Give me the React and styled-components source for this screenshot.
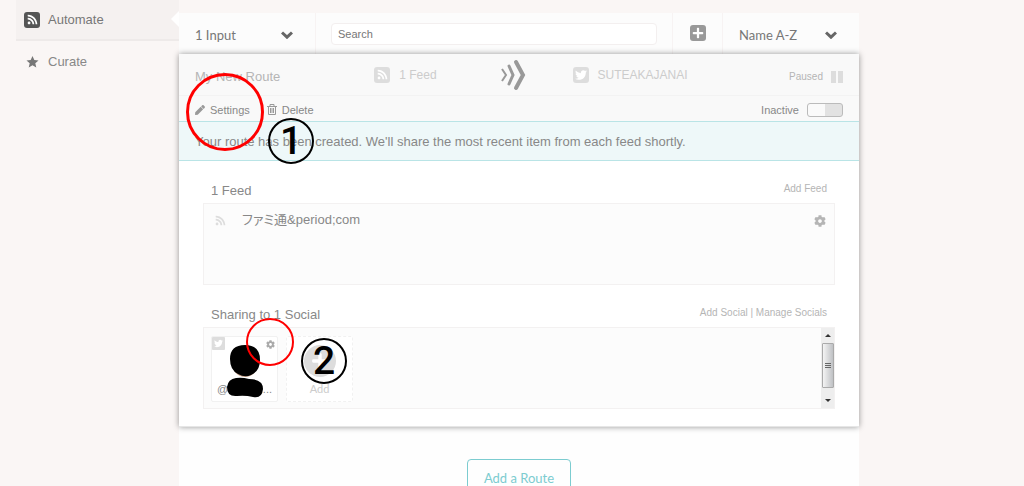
import React from "react";
import styled, { createGlobalStyle } from "styled-components";
import { FaPen, FaCog, FaRss, FaPlus, FaTwitter } from "react-icons/fa";

const GlobalStyle = createGlobalStyle`
  * {
    box-sizing: border-box;
  }
  body {
    margin: 0;
    background: #faf6f5;
    color: #888;
    font-family: "Liberation Sans", "Noto Sans CJK JP", sans-serif;
    font-size: 13px;
    line-height: 16px;
  }
  a {
    color: inherit;
    text-decoration: none;
  }
  button {
    padding: 0;
    border: none;
    background: none;
    color: inherit;
    font: inherit;
    cursor: pointer;
  }
  svg {
    display: block;
    flex: none;
  }
`;

const Page = styled.div`
  display: flex;
  height: 100vh;
  overflow: hidden;
  padding: 0 165px 0 16px;
`;

// Sidebar

const Sidebar = styled.nav`
  flex: none;
  width: 163px;
`;

const SidebarLink = styled.a`
  position: relative;
  display: flex;
  align-items: center;
  gap: 8px;
  height: 41px;
  padding-left: 8px;
  color: ${({ $active }) => ($active ? "#777" : "#888")};
  background: ${({ $active }) => ($active ? "#f5f1f0" : "none")};
  border-bottom: ${({ $active }) => ($active ? "2px solid #eeeae9" : "none")};
`;

const SidebarIcon = styled.span`
  display: flex;
  justify-content: center;
  width: 16px;
  color: ${({ color }) => color};
`;

const Notch = styled.span`
  position: absolute;
  right: 0;
  top: 11px;
  border: 8px solid transparent;
  border-right-color: #fff;
  border-left: none;
`;

const Badge = styled.span`
  display: flex;
  flex: none;
  justify-content: center;
  align-items: center;
  width: 16px;
  height: 16px;
  border-radius: 3px;
  background: ${({ $fill }) => $fill || "#ddd"};
  color: #fff;
`;

// Toolbar

const Main = styled.main`
  flex: 1;
  min-width: 0;
  padding-top: 13px;
`;

const MainBody = styled.div`
  height: 100%;
  background: #fefefe;
`;

const Toolbar = styled.div`
  display: flex;
  height: 41px;
  background: #fcfcfc;
`;

const Picker = styled.button`
  display: flex;
  justify-content: space-between;
  align-items: center;
  width: 136px;
  padding: 2px 22px 0 16px;
  font-family: Lato, sans-serif;
  font-size: 13px;
  color: #777;
`;

const SearchCell = styled.div`
  flex: 1;
  padding: 10px 15px 0;
  border-left: 1px solid #f7f3f3;
  border-right: 1px solid #f7f3f3;
`;

const SearchInput = styled.input`
  display: block;
  width: 100%;
  height: 22px;
  padding: 0 6px;
  border: 1px solid #f3efef;
  border-radius: 4px;
  background: #fff;
  font: 11px "Liberation Sans", sans-serif;
  color: #777;
  &::placeholder {
    color: #777;
    opacity: 1;
  }
`;

const AddCell = styled.button`
  display: flex;
  justify-content: center;
  align-items: center;
  width: 50px;
  padding-bottom: 2px;
  border-right: 1px solid #f7f3f3;
`;

// Route card

const Card = styled.section`
  position: relative;
  padding-bottom: 17px;
  background: #fff;
  border-bottom: 1px solid #e6e6e6;
  box-shadow: 0 0 6px rgba(0, 0, 0, 0.4);
`;

const CardHeader = styled.header`
  display: grid;
  grid-template-columns: 178fr 126fr 71fr 215fr auto;
  align-items: center;
  height: 42px;
  padding: 0 16px;
  background: #f9f9f9;
  border-bottom: 1px solid #f3f3f3;
  color: #ccc;
`;

const RouteName = styled.h2`
  margin: 0;
  padding-top: 4px;
  font-size: 13px;
  font-weight: normal;
  color: #b5b5b5;
`;

const IconLabel = styled.span`
  display: flex;
  align-items: center;
  gap: 9px;
  font-size: 12px;
  white-space: nowrap;
`;

const Status = styled.span`
  display: flex;
  align-items: center;
  gap: 8px;
  padding-top: 4px;
  font-size: 10px;
  color: #b5b5b5;
`;

const Actions = styled.div`
  display: flex;
  align-items: center;
  gap: 17px;
  height: 25px;
  padding: 2px 16px 0;
  background: #f9f9f9;
  font-size: 11px;
`;

const ActionButton = styled.button`
  display: flex;
  align-items: center;
  gap: 5px;
  & > svg {
    color: #999;
  }
`;

const SwitchLabel = styled.label`
  display: flex;
  align-items: center;
  gap: 8px;
  margin-left: auto;
`;

const Switch = styled.input`
  appearance: none;
  width: 36px;
  height: 14px;
  margin: 0;
  border: 1px solid #bbb;
  border-radius: 3px;
  background: linear-gradient(90deg, #fafafa 50%, #e2e2e2 50%);
`;

const Notice = styled.p`
  margin: 0;
  padding: 12px 16px 10px;
  border: 1px solid #b9e4e6;
  border-width: 1px 0;
  background: #eef8f9;
  font-size: 13px;
`;

const Group = styled.div`
  padding: 0 24px;
`;

const GroupHead = styled.div`
  display: flex;
  justify-content: space-between;
  align-items: flex-end;
  height: 42px;
  padding: 0 8px 3px;
`;

const GroupTitle = styled.h3`
  margin: 0;
  font-size: 13px;
  font-weight: normal;
  line-height: 18px;
`;

const GroupLinks = styled.div`
  padding-bottom: 3px;
  font-size: 10px;
  color: #b5b5b5;
`;

const Box = styled.div`
  display: flex;
  height: 82px;
  border: 1px solid #f3f1f1;
  background: #fcfcfc;
`;

const FeedRow = styled.div`
  flex: 1;
  display: flex;
  align-items: flex-start;
  gap: 16px;
  padding: 11px 8px 0 11px;
`;

const FeedName = styled.span`
  flex: 1;
  line-height: 10px;
  font-feature-settings: "palt";
`;

const Tiles = styled.div`
  flex: 1;
  display: flex;
  gap: 8px;
  padding: 8px 7px;
`;

const Tile = styled.div`
  position: relative;
  display: flex;
  flex-direction: column;
  align-items: center;
  justify-content: space-between;
  width: 67px;
  height: 66px;
  padding: 8px 5px 4px;
  border: 1px ${({ $dashed }) => ($dashed ? "dashed" : "solid")} #f1f1f1;
  border-radius: 2px;
  background: #fff;
  font-size: 11px;
`;

const Network = styled.span`
  position: absolute;
  top: 0;
  left: 0;
  padding: 2px;
  border-radius: 1px;
  background: #ddd;
  color: #fff;
`;

const TileSettings = styled.button`
  position: absolute;
  top: 3px;
  right: 2px;
  color: #aaa;
`;

const Handle = styled.span`
  display: flex;
  justify-content: space-between;
  width: 100%;
`;

const Portrait = styled.svg`
  position: absolute;
  top: 8px;
  left: 14px;
`;

const AddTile = styled.button`
  display: flex;
  flex-direction: column;
  align-items: center;
  justify-content: space-between;
  height: 100%;
  font-family: Lato, sans-serif;
  font-size: 11px;
  color: #ccc;
`;

const AddCircle = styled.span`
  display: flex;
  justify-content: center;
  align-items: center;
  width: 32px;
  height: 32px;
  border-radius: 50%;
  background: #ddd;
  color: #fff;
`;

const Scrollbar = styled.div`
  display: flex;
  flex-direction: column;
  align-items: center;
  width: 13px;
  background: #eee;
`;

const ScrollArrow = styled.button`
  display: flex;
  justify-content: center;
  align-items: center;
  width: 100%;
  height: 15px;
`;

const ScrollThumb = styled.div`
  display: flex;
  flex-direction: column;
  justify-content: center;
  align-items: center;
  gap: 1px;
  width: 12px;
  height: 45px;
  margin-bottom: auto;
  border: 1px solid #aaa;
  border-radius: 1px;
  background: linear-gradient(90deg, #f4f4f4, #bfc1c4);
`;

const Grip = styled.span`
  width: 6px;
  height: 1px;
  background: #666;
`;

const AddRoute = styled.button`
  display: block;
  margin: 32px auto 0;
  padding: 0 16px;
  border: 1px solid #7cccd0;
  border-radius: 4px;
  font-family: Lato, sans-serif;
  font-size: 13px;
  line-height: 36px;
  color: #7cccd0;
`;

// Pen marks drawn over the card

const Ring = styled.span`
  position: absolute;
  top: ${({ $top }) => $top}px;
  left: ${({ $left }) => $left}px;
  display: flex;
  justify-content: center;
  align-items: center;
  width: ${({ $size }) => $size}px;
  height: ${({ $size }) => $size}px;
  border: ${({ $line }) => $line}px solid ${({ color }) => color};
  border-radius: 50%;
  pointer-events: none;
  color: ${({ color }) => color};
  font-family: Roboto, sans-serif;
  font-size: 39px;
  font-weight: 500;
`;

const Star = () => (
  <svg width="13" height="12" viewBox="0 0 13 12" fill="currentColor">
    <path d="M6.500 0l1.800 4 4.200.4-3.200 2.800 1 4.300-3.800-2.300-3.800 2.300 1-4.300L.5 4.400 4.700 4z" />
  </svg>
);

const Chevron = () => (
  <svg width="12" height="8" fill="none" stroke="#666" strokeWidth="3">
    <path d="M1 1.500l5 4.700 5-4.700" />
  </svg>
);

const Trash = () => (
  <svg width="10" height="11" fill="none" stroke="currentColor">
    <path d="M0 2.500h10M3 2V.5h4V2M1.500 3v7.500h7V3M3.500 4v5M5 4v5M6.500 4v5" />
  </svg>
);

const RouteArrows = () => (
  <svg width="26" height="32" viewBox="0 0 26 32" fill="none" stroke="#999">
    <path d="M1 10l4 6-4 6" strokeWidth="2" />
    <path d="M8 7l4 9-4 9" strokeWidth="3" strokeLinecap="round" />
    <path d="M15 3l7 13-7 13" strokeWidth="4" strokeLinecap="round" />
  </svg>
);

const PauseBars = () => (
  <svg width="12" height="12" fill="#ddd">
    <path d="M0 0h5v12H0zM7 0h5v12H7z" />
  </svg>
);

function Hidden() {
  return (
    <Portrait width="40" height="56" aria-hidden="true">
      <ellipse cx="19" cy="18" rx="13" ry="14" fill="#c9a48c" />
      <path d="M4 14Q4 0 19 0Q34 0 34 15Q34 26 25 30Q19 33 12 29Q4 25 4 14z" />
      <path d="M10 33Q16 32 23 34Q37 34 37 44Q36 54 27 52Q19 50 11 51Q1 52 1 42Q2 34 10 33z" />
    </Portrait>
  );
}

function App() {
  return (
    <>
      <GlobalStyle />
      <Page>
        <Sidebar>
          <SidebarLink href="#automate" $active>
            <SidebarIcon>
              <Badge $fill="#555">
                <FaRss size={11} />
              </Badge>
            </SidebarIcon>
            Automate
            <Notch />
          </SidebarLink>
          <SidebarLink href="#curate">
            <SidebarIcon color="#777">
              <Star />
            </SidebarIcon>
            Curate
          </SidebarLink>
        </Sidebar>

        <Main>
          <MainBody>
            <Toolbar>
              <Picker>
                1 Input
                <Chevron />
              </Picker>
              <SearchCell>
                <SearchInput placeholder="Search" aria-label="Search" />
              </SearchCell>
              <AddCell aria-label="Add">
                <Badge $fill="#999">
                  <FaPlus size={12} />
                </Badge>
              </AddCell>
              <Picker>
                Name A-Z
                <Chevron />
              </Picker>
            </Toolbar>

            <Card>
              <CardHeader>
                <RouteName>My New Route</RouteName>
                <IconLabel>
                  <Badge>
                    <FaRss size={11} />
                  </Badge>
                  1 Feed
                </IconLabel>
                <RouteArrows />
                <IconLabel>
                  <Badge>
                    <FaTwitter size={12} />
                  </Badge>
                  SUTEAKAJANAI
                </IconLabel>
                <Status>
                  Paused
                  <PauseBars />
                </Status>
              </CardHeader>
              <Actions>
                <ActionButton>
                  <FaPen size={10} />
                  Settings
                </ActionButton>
                <ActionButton>
                  <Trash />
                  Delete
                </ActionButton>
                <SwitchLabel>
                  Inactive
                  <Switch type="checkbox" />
                </SwitchLabel>
              </Actions>
              <Notice>
                Your route has been created. We'll share the most recent item
                from each feed shortly.
              </Notice>

              <Group>
                <GroupHead>
                  <GroupTitle>1 Feed</GroupTitle>
                  <GroupLinks>
                    <a href="#add-feed">Add Feed</a>
                  </GroupLinks>
                </GroupHead>
                <Box>
                  <FeedRow>
                    <FaRss size={11} color="#ddd" />
                    <FeedName>ファミ通&amp;period;com</FeedName>
                    <button aria-label="Feed settings">
                      <FaCog size={12} color="#b5b5b5" />
                    </button>
                  </FeedRow>
                </Box>
              </Group>

              <Group>
                <GroupHead>
                  <GroupTitle>Sharing to 1 Social</GroupTitle>
                  <GroupLinks>
                    <a href="#add-social">Add Social</a> |{" "}
                    <a href="#manage-socials">Manage Socials</a>
                  </GroupLinks>
                </GroupHead>
                <Box>
                  <Tiles>
                    <Tile>
                      <Network>
                        <FaTwitter size={9} />
                      </Network>
                      <TileSettings aria-label="Social settings">
                        <FaCog size={9} />
                      </TileSettings>
                      <span />
                      <Handle>
                        <span>@</span>
                        <span>...</span>
                      </Handle>
                      <Hidden />
                    </Tile>
                    <Tile $dashed>
                      <AddTile>
                        <AddCircle>
                          <FaPlus size={18} />
                        </AddCircle>
                        Add
                      </AddTile>
                    </Tile>
                  </Tiles>
                  <Scrollbar>
                    <ScrollArrow aria-label="Scroll up">
                      <svg width="6" height="3" fill="#333">
                        <path d="M0 3l3-3 3 3z" />
                      </svg>
                    </ScrollArrow>
                    <ScrollThumb>
                      <Grip />
                      <Grip />
                      <Grip />
                    </ScrollThumb>
                    <ScrollArrow aria-label="Scroll down">
                      <svg width="6" height="3" fill="#333">
                        <path d="M0 0h6L3 3z" />
                      </svg>
                    </ScrollArrow>
                  </Scrollbar>
                </Box>
              </Group>

              <Ring $top={19} $left={7} $size={78} $line={3} color="#f00" />
              <Ring $top={64} $left={89} $size={46} $line={2} color="#000">
                1
              </Ring>
              <Ring $top={264} $left={67} $size={48} $line={2} color="#f00" />
              <Ring $top={284} $left={122} $size={46} $line={2} color="#000">
                2
              </Ring>
            </Card>

            <AddRoute>Add a Route</AddRoute>
          </MainBody>
        </Main>
      </Page>
    </>
  );
}

export default App;
